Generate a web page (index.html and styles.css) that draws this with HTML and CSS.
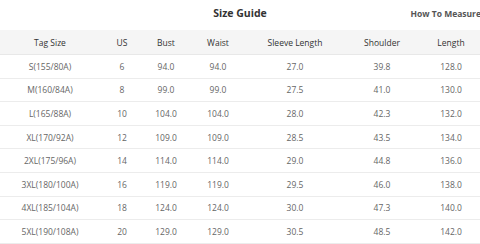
FILE: index.html
```html
<!DOCTYPE html>
<html>
<head>
  <title>Size Guide</title>
  <link rel="stylesheet" href="styles.css">
</head>
<body>
  <div class="guide">
    <div class="guide-head">
      <h1 class="guide-title">Size Guide</h1>
      <a class="measure-link" href="#">How To Measure</a>
    </div>
    <table class="size-table">
      <colgroup>
        <col class="c-tag"><col class="c-us"><col class="c-bust"><col class="c-waist">
        <col class="c-sleeve"><col class="c-shoulder"><col class="c-length">
      </colgroup>
      <thead>
        <tr>
          <th>Tag Size</th><th>US</th><th>Bust</th><th>Waist</th><th>Sleeve Length</th><th>Shoulder</th><th>Length</th>
        </tr>
      </thead>
      <tbody>
        <tr><td>S(155/80A)</td><td>6</td><td>94.0</td><td>94.0</td><td>27.0</td><td>39.8</td><td>128.0</td></tr>
        <tr><td>M(160/84A)</td><td>8</td><td>99.0</td><td>99.0</td><td>27.5</td><td>41.0</td><td>130.0</td></tr>
        <tr><td>L(165/88A)</td><td>10</td><td>104.0</td><td>104.0</td><td>28.0</td><td>42.3</td><td>132.0</td></tr>
        <tr><td>XL(170/92A)</td><td>12</td><td>109.0</td><td>109.0</td><td>28.5</td><td>43.5</td><td>134.0</td></tr>
        <tr><td>2XL(175/96A)</td><td>14</td><td>114.0</td><td>114.0</td><td>29.0</td><td>44.8</td><td>136.0</td></tr>
        <tr><td>3XL(180/100A)</td><td>16</td><td>119.0</td><td>119.0</td><td>29.5</td><td>46.0</td><td>138.0</td></tr>
        <tr><td>4XL(185/104A)</td><td>18</td><td>124.0</td><td>124.0</td><td>30.0</td><td>47.3</td><td>140.0</td></tr>
        <tr><td>5XL(190/108A)</td><td>20</td><td>129.0</td><td>129.0</td><td>30.5</td><td>48.5</td><td>142.0</td></tr>
      </tbody>
    </table>
  </div>
</body>
</html>
```

FILE: styles.css
```css
body {
  font-family: "Open Sans", Arial, sans-serif;
  background-color: #fff;
  margin: 0;
}

.guide {
  width: 480px;
  overflow: hidden;
}

.guide-head {
  position: relative;
  height: 30px;
}

.guide-title {
  margin: 0;
  padding-top: 5px;
  text-align: center;
  font-size: 10.5px;
  font-weight: bold;
  line-height: 16px;
  color: #333;
}

.measure-link {
  position: absolute;
  right: -1px;
  top: 7px;
  font-size: 8.5px;
  font-weight: bold;
  line-height: 14px;
  color: #555;
  text-decoration: none;
}

.size-table {
  width: 480px;
  border-collapse: collapse;
  table-layout: fixed;
}

.c-tag { width: 100px; }
.c-us { width: 44px; }
.c-bust { width: 44px; }
.c-waist { width: 60px; }
.c-sleeve { width: 94px; }
.c-shoulder { width: 80px; }
.c-length { width: 58px; }

.size-table th {
  height: 24px;
  padding: 0;
  background-color: #f5f5f5;
  border-bottom: 1px solid #e8e8e8;
  font-size: 8.5px;
  font-weight: normal;
  color: #333;
  text-align: center;
}

.size-table td {
  height: 22.6px;
  padding: 0;
  border-bottom: 1px solid #ececec;
  font-size: 8.5px;
  color: #666;
  text-align: center;
}
```
